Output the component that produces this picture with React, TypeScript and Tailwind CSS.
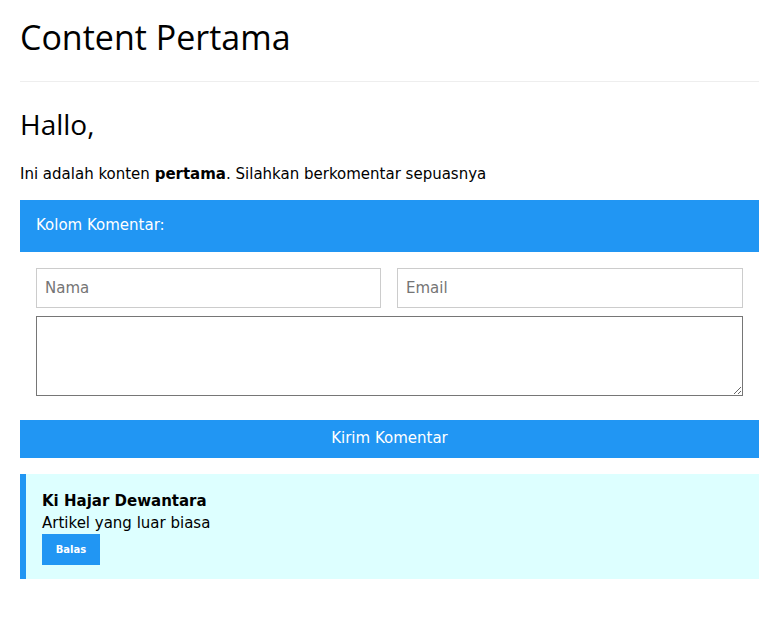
export default function App() {
  return (
    <div className="min-h-screen bg-white px-[20px] text-[15px] leading-[1.5] text-black" style={{ fontFamily: '"DejaVu Sans", Verdana, sans-serif' }}>
      <h1 className="m-0 pt-[10px] text-[34px] leading-[54px]" style={{ fontFamily: '"Open Sans", "Noto Sans", sans-serif' }}>
        Content Pertama
      </h1>
      <hr className="mt-[17px] mb-[20px] w-[739px] border-0 border-t border-[#eeeeee]" />
      <h2 className="m-0 text-[28px] leading-[45px]" style={{ fontFamily: '"Open Sans", "Noto Sans", sans-serif' }}>
        Hallo,
      </h2>
      <p className="mt-[16px] mb-0 text-[15px]">
        Ini adalah konten <b>pertama</b>. Silahkan berkomentar sepuasnya
      </p>

      <div className="mt-[14px] w-[739px]">
        <div className="flex h-[52px] items-center bg-[#2196f3] px-[16px] text-white">Kolom Komentar:</div>
        <div className="px-[16px] pt-[16px]">
          <div className="flex gap-[16px]">
            <input
              placeholder="Nama"
              className="h-[40px] w-[345px] border border-[#cccccc] px-[8px] text-[15px] placeholder:text-[#757575] outline-none"
            />
            <input
              placeholder="Email"
              className="h-[40px] w-[346px] border border-[#cccccc] px-[8px] text-[15px] placeholder:text-[#757575] outline-none"
            />
          </div>
          <textarea className="mt-[8px] block h-[80px] w-[707px] border border-[#767676] p-[2px] outline-none" style={{ resize: "both" }} />
        </div>
        <button className="mt-[24px] flex h-[38px] w-full items-center justify-center bg-[#2196f3] text-white">Kirim Komentar</button>

        <div className="mt-[16px] border-l-[6px] border-[#2196f3] bg-[#ddffff] px-[16px] pt-[16px] pb-[14px]">
          <div className="font-bold leading-[22px]">Ki Hajar Dewantara</div>
          <div className="leading-[22px]">Artikel yang luar biasa</div>
          <button className="h-[31px] w-[58px] bg-[#2196f3] text-[10px] font-bold text-white">Balas</button>
        </div>
      </div>
    </div>
  );
}
